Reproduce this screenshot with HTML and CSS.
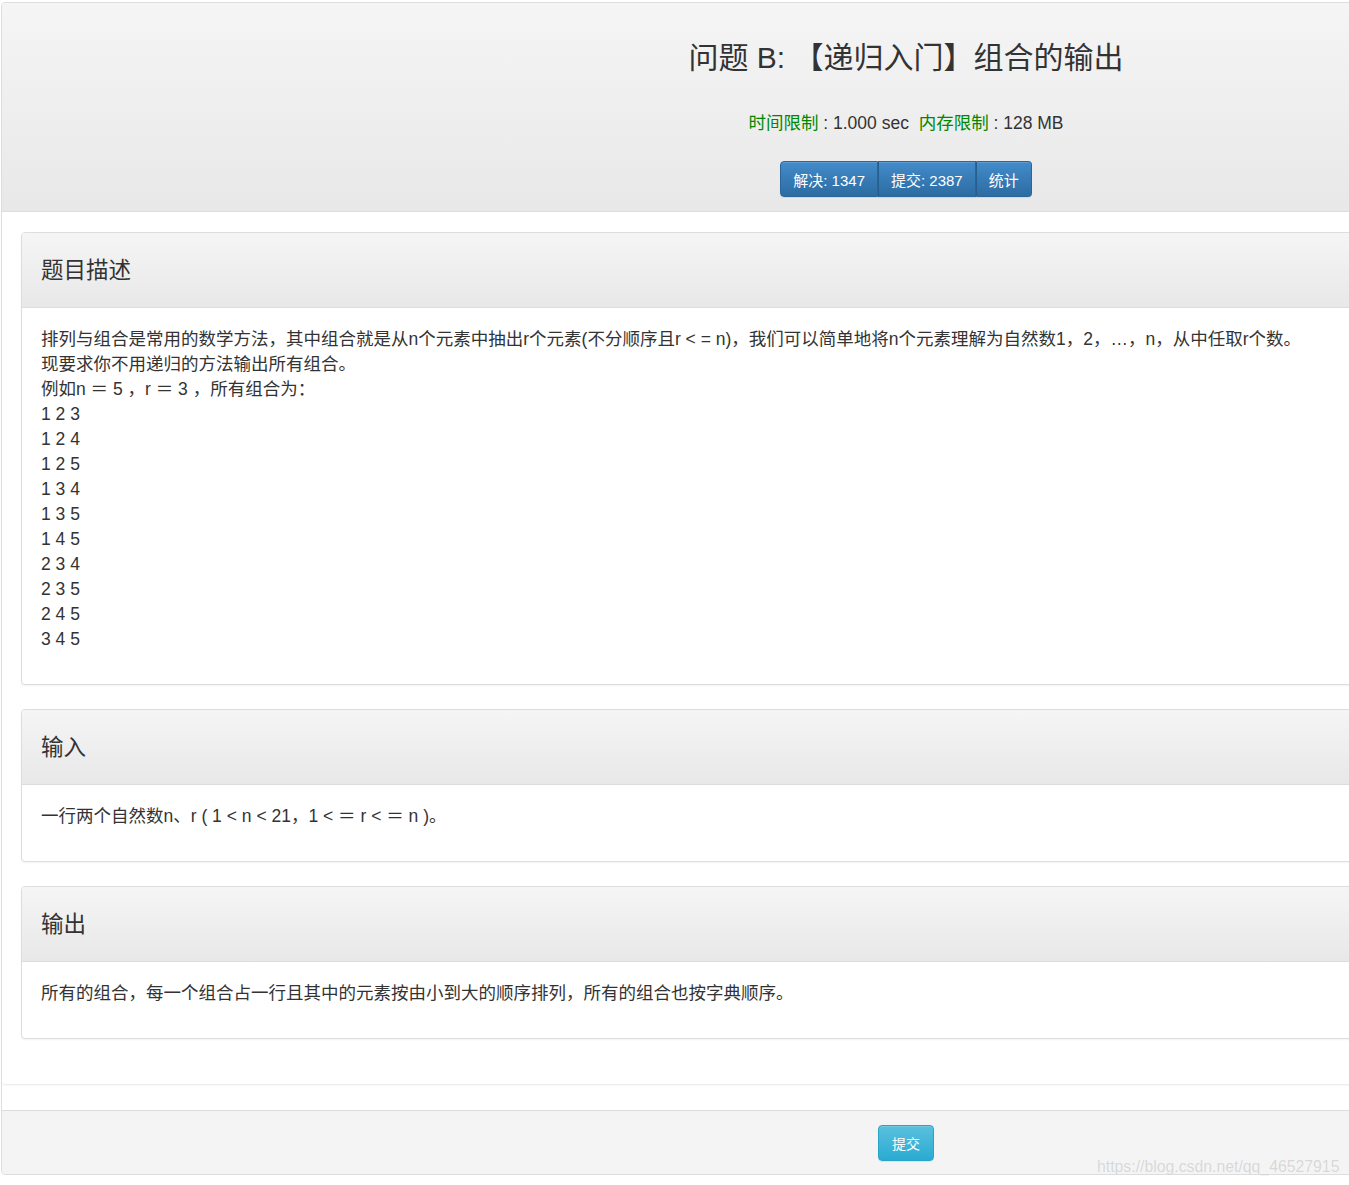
FILE: index.html
```html
<!DOCTYPE html>
<html lang="zh-CN">
<head>
<meta charset="utf-8">
<title>问题 B: 【递归入门】组合的输出</title>
<link rel="stylesheet" href="styles.css">
</head>
<body>
<div class="main">
  <div class="head">
    <h1 class="title">问题 B: 【递归入门】组合的输出</h1>
    <div class="limits"><span class="lbl">时间限制</span> : 1.000 sec&nbsp; <span class="lbl">内存限制</span> : 128 MB</div>
    <div class="btn-group">
      <span class="btn btn-primary">解决: 1347</span><span class="btn btn-primary">提交: 2387</span><span class="btn btn-primary">统计</span>
    </div>
  </div>
  <div class="content">
    <div class="panel">
      <div class="panel-heading">题目描述</div>
      <div class="panel-body">排列与组合是常用的数学方法，其中组合就是从n个元素中抽出r个元素(不分顺序且r &lt; = n)，我们可以简单地将n个元素理解为自然数1，2，…，n，从中任取r个数。<br>现要求你不用递归的方法输出所有组合。<br>例如n ＝ 5 ，r ＝ 3 ，所有组合为：<br>1 2 3<br>1 2 4<br>1 2 5<br>1 3 4<br>1 3 5<br>1 4 5<br>2 3 4<br>2 3 5<br>2 4 5<br>3 4 5</div>
    </div>
    <div class="panel">
      <div class="panel-heading">输入</div>
      <div class="panel-body">一行两个自然数n、r ( 1 &lt; n &lt; 21，1 &lt; ＝ r &lt; ＝ n )。</div>
    </div>
    <div class="panel">
      <div class="panel-heading">输出</div>
      <div class="panel-body">所有的组合，每一个组合占一行且其中的元素按由小到大的顺序排列，所有的组合也按字典顺序。</div>
    </div>
  </div>
  <div class="footer">
    <span class="btn btn-info">提交</span>
  </div>
</div>
<div class="watermark">https://blog.csdn.net/qq_46527915</div>
</body>
</html>
```
FILE: styles.css
```css
html, body {
  margin: 0;
  padding: 0;
  overflow: hidden;
  background: #fff;
}
body {
  font-family: "Liberation Sans", "Noto Sans CJK SC", sans-serif;
  color: #333;
  width: 1349px;
  height: 1185px;
  position: relative;
}
.main {
  margin: 2px 0 0 1px;
  width: 1808px;
  border: 1px solid #ddd;
  border-radius: 4px;
  overflow: hidden;
}
.head {
  background: linear-gradient(to bottom, #f5f5f5 0%, #e8e8e8 100%);
  border-bottom: 1px solid #ddd;
  padding: 38px 0 14px;
  text-align: center;
}
.title {
  margin: 0;
  font-size: 30px;
  font-weight: normal;
  line-height: 34px;
  color: #333;
}
.limits {
  margin-top: 35px;
  font-size: 17.5px;
  line-height: 26px;
}
.lbl {
  color: #080;
}
.btn-group {
  margin-top: 25px;
  display: inline-flex;
}
.btn {
  display: inline-flex;
  align-items: center;
  height: 36px;
  box-sizing: border-box;
  padding: 0 12px;
  font-size: 15px;
  color: #fff;
  white-space: nowrap;
  border: 1px solid #2b669a;
}
.btn-primary {
  background: linear-gradient(to bottom, #428bca 0%, #2d6ca2 100%);
  box-shadow: inset 0 1px 0 rgba(255,255,255,.15), 0 1px 1px rgba(0,0,0,.075);
}
.btn-group .btn + .btn {
  border-left: 1px solid #285e8e;
}
.btn-group .btn:first-child {
  border-radius: 4px 0 0 4px;
}
.btn-group .btn:last-child {
  border-radius: 0 4px 4px 0;
}
.content {
  padding: 20px 19px 45px;
  border-bottom: 1px solid #eee;
  border-radius: 0 0 4px 4px;
  box-shadow: 0 1px 1px rgba(0,0,0,.03);
}
.panel {
  border: 1px solid #ddd;
  border-radius: 4px;
  box-shadow: 0 1px 2px rgba(0,0,0,.05);
  background: #fff;
  margin-bottom: 24px;
  overflow: hidden;
}
.panel:last-child {
  margin-bottom: 0;
}
.panel-heading {
  background: linear-gradient(to bottom, #f5f5f5 0%, #e8e8e8 100%);
  border-bottom: 1px solid #ddd;
  height: 75px;
  box-sizing: border-box;
  padding: 0 19px 5px;
  display: flex;
  align-items: center;
  font-size: 22.5px;
  color: #333;
}
.panel-body {
  padding: 19px 19px 32px;
  font-size: 17.5px;
  line-height: 25px;
}
.footer {
  margin-top: 25px;
  border-top: 1px solid #ddd;
  background: #f4f4f4;
  height: 63px;
  display: flex;
  justify-content: center;
  align-items: center;
}
.btn-info {
  background: linear-gradient(to bottom, #5bc0de 0%, #2aabd2 100%);
  border-color: #28a4c9;
  border-radius: 4px;
  padding: 0;
  width: 56px;
  font-size: 14px;
  justify-content: center;
  box-shadow: inset 0 1px 0 rgba(255,255,255,.15), 0 1px 1px rgba(0,0,0,.075);
}
.watermark {
  position: absolute;
  left: 1097px;
  top: 1157px;
  font-size: 15.8px;
  line-height: 20px;
  color: rgba(205,205,205,.8);
  text-shadow: 0 0 1px #fff;
  white-space: nowrap;
}
```
